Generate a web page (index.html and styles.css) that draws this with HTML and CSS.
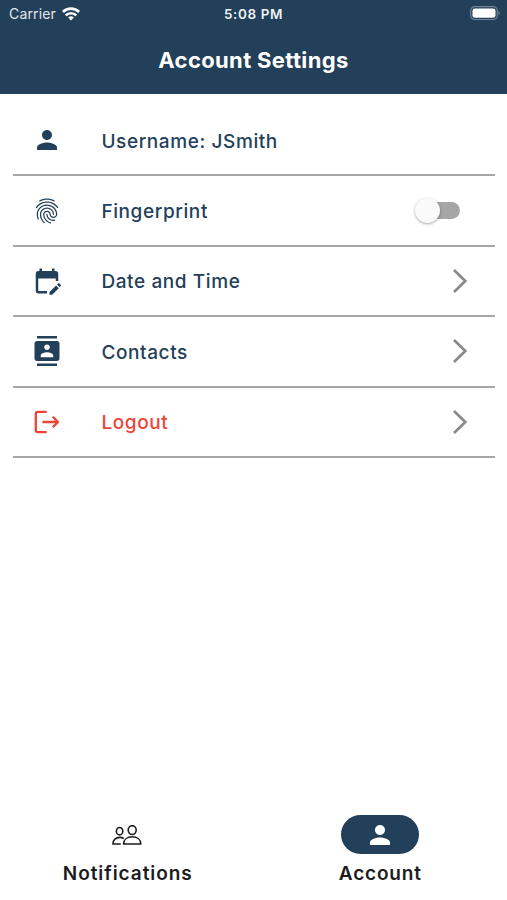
FILE: index.html
```html
<!DOCTYPE html>
<html lang="en">
<head>
  <meta charset="UTF-8" />
  <meta name="viewport" content="width=device-width, initial-scale=1.0"/>
  <title>Account Settings</title>
  <link rel="stylesheet" href="styles.css">
</head>
<body>
  <header class="header">
    <div class="status">
      <div class="carrier">
        <span>Carrier</span>
        <svg class="wifi" viewBox="0 0 18 14" fill="none" stroke="#fff" stroke-width="2.6">
          <path d="M0.9 5a11.5 11.5 0 0 1 16.2 0"/>
          <path d="M3.7 8.4a7.5 7.5 0 0 1 10.6 0"/>
          <path d="M6.1 10.6a4.1 4.1 0 0 1 5.8 0L9 13.6z" fill="#fff" stroke="none"/>
        </svg>
      </div>
      <div class="time">5:08 PM</div>
      <svg class="battery" viewBox="0 0 30 14">
        <rect x="0.7" y="0.7" width="26.6" height="12.8" rx="4" fill="none" stroke="#708395" stroke-width="1.2"/>
        <rect x="2.5" y="2.5" width="23" height="9.2" rx="2.2" fill="#fff"/>
        <path d="M28.5 5v4.2q1.3-.7 1.3-2.1t-1.3-2.1z" fill="#708395"/>
      </svg>
    </div>
    <h1>Account Settings</h1>
  </header>

  <main class="list">
    <div class="row">
      <svg class="icon" viewBox="0 0 24 24"><path d="M12 12c2.21 0 4-1.79 4-4s-1.79-4-4-4-4 1.79-4 4 1.79 4 4 4zm0 2c-2.67 0-8 1.34-8 4v2h16v-2c0-2.66-5.33-4-8-4z"/></svg>
      <span class="label">Username: JSmith</span>
    </div>
    <div class="row">
      <svg class="icon" viewBox="0 0 24 24"><path d="M17.81 4.47c-.08 0-.16-.02-.23-.06C15.66 3.42 14 3 12.01 3c-1.98 0-3.86.47-5.57 1.41-.24.13-.54.04-.68-.2-.13-.24-.04-.55.2-.68C7.82 2.52 9.86 2 12.01 2c2.13 0 3.99.47 6.03 1.52.25.13.34.43.21.67-.09.18-.26.28-.44.28zM3.5 9.72c-.1 0-.2-.03-.29-.09-.23-.16-.28-.47-.12-.7.99-1.4 2.25-2.5 3.75-3.27C9.98 4.04 14 4.03 17.15 5.65c1.5.77 2.76 1.86 3.75 3.25.16.22.11.54-.12.7-.23.16-.54.11-.7-.12-.9-1.26-2.04-2.25-3.39-2.94-2.87-1.47-6.54-1.47-9.4.01-1.36.7-2.5 1.7-3.4 2.96-.08.14-.23.21-.39.21zm6.25 12.07c-.13 0-.26-.05-.35-.15-.87-.87-1.34-1.43-2.01-2.64-.69-1.23-1.05-2.73-1.05-4.34 0-2.97 2.54-5.39 5.66-5.39s5.66 2.42 5.66 5.39c0 .28-.22.5-.5.5s-.5-.22-.5-.5c0-2.42-2.09-4.39-4.66-4.39-2.57 0-4.66 1.97-4.66 4.39 0 1.44.32 2.77.93 3.85.64 1.15 1.08 1.64 1.85 2.42.19.2.19.51 0 .71-.11.1-.24.15-.37.15zm7.17-1.85c-1.19 0-2.24-.3-3.1-.89-1.49-1.01-2.38-2.65-2.38-4.39 0-.28.22-.5.5-.5s.5.22.5.5c0 1.41.72 2.74 1.94 3.56.71.48 1.54.71 2.54.71.24 0 .64-.03 1.04-.1.27-.05.53.13.58.41.05.27-.13.53-.41.58-.57.11-1.07.12-1.21.12zM14.91 22c-.04 0-.09-.01-.13-.02-1.59-.44-2.63-1.03-3.72-2.1-1.4-1.39-2.17-3.24-2.17-5.22 0-1.62 1.38-2.94 3.08-2.94 1.7 0 3.08 1.32 3.08 2.94 0 1.07.93 1.94 2.08 1.94s2.08-.87 2.08-1.94c0-3.77-3.25-6.83-7.25-6.83-2.84 0-5.44 1.58-6.61 4.03-.39.81-.59 1.76-.59 2.8 0 .78.07 2.01.67 3.61.1.26-.03.55-.29.64-.26.1-.55-.04-.64-.29-.49-1.31-.73-2.61-.73-3.96 0-1.2.23-2.29.68-3.24 1.33-2.79 4.28-4.6 7.51-4.6 4.55 0 8.25 3.51 8.25 7.83 0 1.62-1.38 2.94-3.08 2.94s-3.08-1.32-3.08-2.94c0-1.07-.93-1.94-2.08-1.94s-2.08.87-2.08 1.94c0 1.71.66 3.31 1.87 4.51.95.94 1.86 1.46 3.27 1.85.27.07.42.35.35.61-.05.23-.26.38-.47.38z"/></svg>
      <span class="label">Fingerprint</span>
      <span class="switch"><span class="knob"></span></span>
    </div>
    <div class="row">
      <svg class="icon" viewBox="0 0 24 24"><path d="M12 22H5c-1.11 0-2-.9-2-2L3.01 6c0-1.1.88-2 1.99-2h1V2h2v2h8V2h2v2h1c1.1 0 2 .9 2 2v6h-2v-2H5v10h7v2zm10.13-5.01.71-.71c.39-.39.39-1.02 0-1.41l-.71-.71c-.39-.39-1.02-.39-1.41 0l-.71.71 2.12 2.12zm-.71.71-5.3 5.3H14v-2.12l5.3-5.3 2.12 2.12z"/></svg>
      <span class="label">Date and Time</span>
      <svg class="chevron" viewBox="0 0 16 26"><path d="M2 2l11.3 11L2 24"/></svg>
    </div>
    <div class="row">
      <svg class="icon" viewBox="0 0 24 24"><path d="M20 0H4v2h16V0zM4 24h16v-2H4v2zM20 4H4c-1.1 0-2 .9-2 2v12c0 1.1.9 2 2 2h16c1.1 0 2-.9 2-2V6c0-1.1-.9-2-2-2zm-8 2.75c1.24 0 2.25 1.01 2.25 2.25s-1.01 2.25-2.25 2.25S9.75 10.24 9.75 9 10.76 6.75 12 6.75zM17 17H7v-1.5c0-1.67 3.33-2.5 5-2.5s5 .83 5 2.5V17z"/></svg>
      <span class="label">Contacts</span>
      <svg class="chevron" viewBox="0 0 16 26"><path d="M2 2l11.3 11L2 24"/></svg>
    </div>
    <div class="row logout">
      <svg class="icon line" viewBox="0 0 30 30"><path d="M14.7 4.9H5.6q-1.8 0-1.8 1.8v16.6q0 1.8 1.8 1.8h9.1M10.5 15H26M20.8 9.8 26 15l-5.2 5.2"/></svg>
      <span class="label">Logout</span>
      <svg class="chevron" viewBox="0 0 16 26"><path d="M2 2l11.3 11L2 24"/></svg>
    </div>
  </main>

  <nav class="tabs">
    <div class="tab">
      <div class="pill">
        <svg class="people" viewBox="0 0 30 20">
          <ellipse cx="20.2" cy="5.1" rx="4" ry="4.4"/>
          <path d="M11.6 19h17.2c0-4.4-3.6-7.2-8.6-7.2s-8.6 2.8-8.6 7.2z"/>
          <ellipse cx="7.6" cy="6.2" rx="3.2" ry="3.7"/>
          <path d="M8.8 19H1c0-4.2 2.8-6.6 6.8-6.6 1.6 0 3 .4 4 1.1"/>
        </svg>
      </div>
      <span class="wide">Notifications</span>
    </div>
    <div class="tab active">
      <div class="pill">
        <svg class="icon" viewBox="0 0 24 24"><path d="M12 12c2.21 0 4-1.79 4-4s-1.79-4-4-4-4 1.79-4 4 1.79 4 4 4zm0 2c-2.67 0-8 1.34-8 4v2h16v-2c0-2.66-5.33-4-8-4z"/></svg>
      </div>
      <span>Account</span>
    </div>
  </nav>
</body>
</html>
```
FILE: styles.css
```css
* {
  box-sizing: border-box;
}
body {
  margin: 0;
  height: 900px;
  display: flex;
  flex-direction: column;
  background: #fff;
  color: #23405a;
  font-family: Inter, "Liberation Sans", sans-serif;
}
.header {
  height: 94px;
  background: #23405a;
  color: #fff;
}
.status {
  height: 27px;
  padding: 0 7px 0 9px;
  display: grid;
  grid-template-columns: 1fr auto 1fr;
  align-items: center;
}
.carrier {
  display: flex;
  align-items: center;
  gap: 6px;
  font-size: 14px;
  letter-spacing: 0.15px;
  color: #e3e8ed;
}
.wifi {
  width: 18px;
  height: 14px;
}
.time {
  margin-right: 2px;
  font-size: 13.5px;
  font-weight: 600;
  letter-spacing: 0.6px;
  color: #eef1f4;
}
.battery {
  width: 30px;
  height: 14px;
  margin-top: -1px;
  justify-self: end;
}
h1 {
  margin: 20px 0 0;
  text-align: center;
  font-size: 22px;
  line-height: 26px;
  font-weight: 700;
  letter-spacing: 0.35px;
}
.list {
  flex: 1;
  padding: 12px 12px 0 13px;
}
.row {
  height: 70.4px;
  padding: 0 27px 0 19.4px;
  display: flex;
  align-items: center;
  border-bottom: 2px solid #a6a6a6;
}
.icon {
  width: 30px;
  height: 30px;
  fill: currentColor;
}
.line {
  fill: none;
  stroke: currentColor;
  stroke-width: 2.3;
  stroke-linejoin: round;
}
.label {
  flex: 1;
  margin-left: 39px;
  padding-top: 2px;
  font-size: 19px;
  font-weight: 500;
  letter-spacing: 0.6px;
}
.logout {
  color: #ee4438;
}
.chevron {
  width: 16px;
  height: 26px;
  fill: none;
  stroke: #8a8a8a;
  stroke-width: 2.7;
}
.switch {
  width: 40px;
  height: 17px;
  margin-right: 8px;
  display: flex;
  align-items: center;
  border-radius: 9px;
  background: #a6a6a6;
}
.knob {
  width: 25px;
  height: 25px;
  margin-left: -5px;
  border-radius: 50%;
  background: #fafafa;
  box-shadow: 0 1px 3px rgba(0,0,0,0.35);
}
.tabs {
  height: 85px;
  display: flex;
}
.tab {
  flex: 1;
  display: flex;
  flex-direction: column;
  align-items: center;
  gap: 8px;
  color: #1c1c1e;
  font-size: 19px;
  line-height: 24px;
  font-weight: 600;
  letter-spacing: 0.8px;
}
.wide {
  margin-left: 2px;
  letter-spacing: 0.95px;
}
.pill {
  width: 78px;
  height: 39px;
  display: flex;
  align-items: center;
  justify-content: center;
  border-radius: 20px;
}
.active .pill {
  background: #23405a;
  color: #fff;
}
.people {
  width: 30px;
  height: 20px;
  fill: none;
  stroke: #1c1c1e;
  stroke-width: 1.6;
}
```
